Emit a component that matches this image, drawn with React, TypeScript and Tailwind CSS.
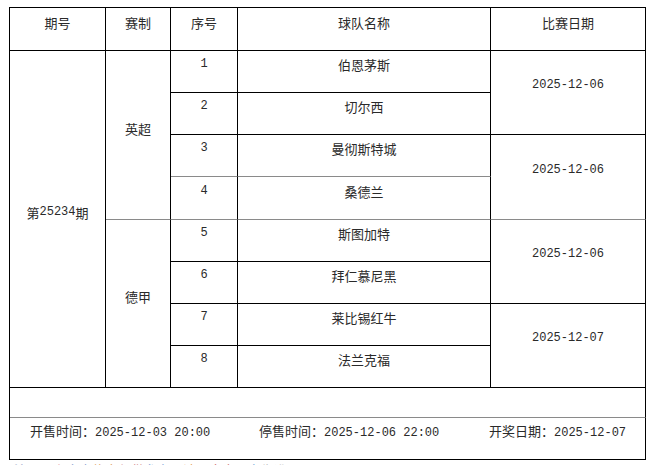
import * as React from 'react';

type Match = {
  no: string;
  team: string;
  bottom: 'black' | 'gray';
};

const matches: Match[] = [
  { no: '1', team: '伯恩茅斯', bottom: 'black' },
  { no: '2', team: '切尔西', bottom: 'black' },
  { no: '3', team: '曼彻斯特城', bottom: 'gray' },
  { no: '4', team: '桑德兰', bottom: 'gray' },
  { no: '5', team: '斯图加特', bottom: 'black' },
  { no: '6', team: '拜仁慕尼黑', bottom: 'black' },
  { no: '7', team: '莱比锡红牛', bottom: 'black' },
  { no: '8', team: '法兰克福', bottom: 'black' },
];

const rowStart = [
  'row-start-2',
  'row-start-3',
  'row-start-4',
  'row-start-5',
  'row-start-6',
  'row-start-7',
  'row-start-8',
  'row-start-9',
];

const dates = [
  { date: '2025-12-06', row: 'row-start-2', bottom: 'black' },
  { date: '2025-12-06', row: 'row-start-4', bottom: 'gray' },
  { date: '2025-12-06', row: 'row-start-6', bottom: 'black' },
  { date: '2025-12-07', row: 'row-start-8', bottom: 'black' },
];

const cell = 'flex items-center justify-center pb-[14px] border-r border-b border-r-black';
const mono = 'font-["Liberation_Mono",monospace] text-[12px]';

function Cell({
  className,
  bottom = 'black',
  children,
}: {
  className: string;
  bottom?: string;
  children?: React.ReactNode;
}) {
  return (
    <div className={`${cell} ${bottom === 'gray' ? 'border-b-[#8a8a8a]' : 'border-b-black'} ${className}`}>
      {children}
    </div>
  );
}

export default function App() {
  return (
    <div className='w-[650px] h-[465px] overflow-hidden bg-white text-[13px] text-[#2a2a2a] font-["Noto_Sans_CJK_SC","Liberation_Sans",sans-serif] leading-[15px]'>
      <div className="ml-[9px] mt-[7px] w-[637px] grid grid-cols-[96px_65px_67px_253px_155px] grid-rows-[43px_42px_42px_42px_43px_42px_42px_42px_42px_30px_42px] border-l border-t border-black">
        {/* header */}
        <Cell className="col-start-1 row-start-1">期号</Cell>
        <Cell className="col-start-2 row-start-1">赛制</Cell>
        <Cell className="col-start-3 row-start-1">序号</Cell>
        <Cell className="col-start-4 row-start-1">球队名称</Cell>
        <Cell className="col-start-5 row-start-1">比赛日期</Cell>

        <Cell className="col-start-1 row-start-2 row-span-8">
          第<span className={mono}>25234</span>期
        </Cell>
        <Cell className="col-start-2 row-start-2 row-span-4" bottom="gray">英超</Cell>
        <Cell className="col-start-2 row-start-6 row-span-4">德甲</Cell>

        {matches.map((m, i) => (
          <React.Fragment key={m.no}>
            <Cell className={`col-start-3 ${rowStart[i]}`} bottom={m.bottom}>
              <span className={mono}>{m.no}</span>
            </Cell>
            <Cell className={`col-start-4 ${rowStart[i]}`} bottom={m.bottom}>
              {m.team}
            </Cell>
          </React.Fragment>
        ))}

        {dates.map((d) => (
          <Cell key={d.row} className={`col-start-5 ${d.row} row-span-2`} bottom={d.bottom}>
            <span className={mono}>{d.date}</span>
          </Cell>
        ))}

        <Cell className="col-start-1 col-span-5 row-start-10" bottom="gray" />

        <div className="col-start-1 col-span-5 row-start-11 border-r border-b border-black flex items-center pb-[14px] pl-[20px]">
          <span className="w-[229px]">
            开售时间：<span className={mono}>2025-12-03 20:00</span>
          </span>
          <span className="w-[230px]">
            停售时间：<span className={mono}>2025-12-06 22:00</span>
          </span>
          <span>
            开奖日期：<span className={mono}>2025-12-07</span>
          </span>
        </div>
      </div>

      <div className="mt-[3px] pl-[14px] leading-[13px] whitespace-nowrap">
        <span className="text-[#9aa6c8]">注：</span>
        <span className="text-[#e89aa8]">以上</span>
        <span className="text-[#8aa0d0]">赛事</span>
        <span className="text-[#e0a060]">信息</span>
        <span className="text-[#d08080]">仅供</span>
        <span className="text-[#80a0d8]">参考</span>
        <span className="text-[#e6a050]">，请以</span>
        <span className="text-[#d07070]">官方</span>
        <span className="text-[#70a8d8]">公布</span>
        <span className="text-[#c0c0c0]">为准。</span>
      </div>
    </div>
  );
}
